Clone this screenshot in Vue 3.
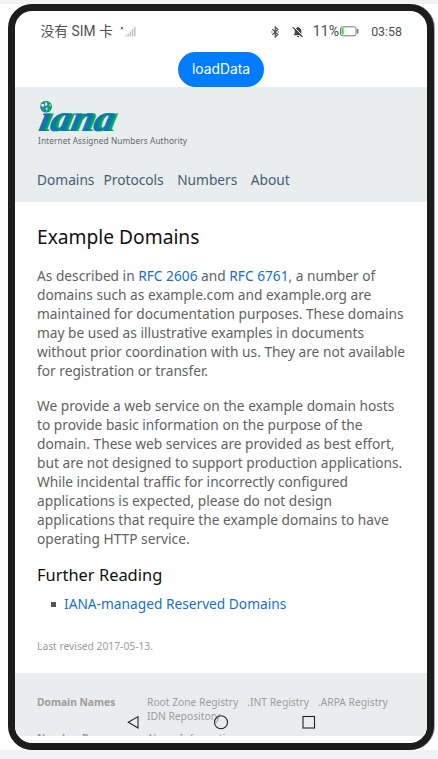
<script setup>
const nav = ['Domains', 'Protocols', 'Numbers', 'About']
</script>

<template>
  <div class="stage">
    <main class="phone">
      <header class="status">
        <span class="sim">没有 SIM 卡</span>
        <svg class="signal" width="17" height="12" viewBox="0 0 17 12">
          <path d="M.8 1l2.4 2.4M3.2 1L.8 3.4" stroke="#555" stroke-width="1" />
          <path d="M6 10.5V9M8.2 10.5v-3M10.4 10.5V5.5M12.6 10.5V3M14.8 10.5V1" stroke="#c2c2c2" stroke-width="1.5" />
        </svg>
        <span class="fill"></span>
        <svg class="bt" width="9" height="12" viewBox="0 0 9 12" fill="none" stroke="#4a4a4a" stroke-width="1.1">
          <path d="M1.3 3.2L6.9 8.5L4.2 11V1l2.7 2.5L1.3 8.8M.3 6h1.2M6.8 6H8" />
        </svg>
        <svg class="bell" width="12" height="12" viewBox="0 0 12 12">
          <path d="M1.5 9.2h9L9.3 7.5V5C9.3 3 8 2 6.8 1.7V.8H5.2v.9C4 2 2.7 3 2.7 5v2.5zM4.5 10h3L6 11.5z" fill="#444" />
          <path d="M1.5.5l10 10" stroke="#fff" stroke-width="1" />
          <path d="M.7 1.2l9.8 9.8" stroke="#444" stroke-width="1.1" />
        </svg>
        <span class="percent">11%</span>
        <svg class="battery" width="19" height="11" viewBox="0 0 19 11">
          <rect x=".5" y=".8" width="15.5" height="9" rx="2" fill="#fff" stroke="#777" />
          <rect x="1.3" y="2" width="2.5" height="6.5" rx=".7" fill="#4cdc57" />
          <path d="M17.7 3v4.5" stroke="#777" stroke-width="1.5" />
        </svg>
        <span class="clock">03:58</span>
      </header>
      <div class="action"><button>loadData</button></div>

      <section class="web">
        <div class="masthead">
          <svg class="logo" width="155" height="48" viewBox="0 0 155 48">
            <g class="mark" transform="translate(0 31.3) skewX(-12)">
              <text class="green" x="3.2" y="0" textLength="75" lengthAdjust="spacingAndGlyphs">ıana</text>
              <text class="blue" x="0" y="-.7" textLength="75" lengthAdjust="spacingAndGlyphs">ıana</text>
            </g>
            <circle cx="9" cy="6.8" r="5.8" fill="#168ac1" />
            <path d="M3.4 4.2C4.7 2 6.7 1 8.9 1L7.5 3.2 6 6.3zM10.2 1l3.6 2.2 1.2 4-2.2 4.3-3-1.5.3-3.5 2-1zM5.2 8l2.7 1 .3 3.4-3-1.4z" fill="#18a34c" />
            <path d="M3.7 4.5l3-.8.8 2.3-2 1zM8.9 1.4l1.7 2.9-1.7 2-1-2zM8.4 8.2l2-.8-.2 3.6zM12.2 4l1.5 1-.7 2z" fill="#e2f3ee" />
            <text class="tagline" x="1" y="44" textLength="149">Internet Assigned Numbers Authority</text>
          </svg>
          <nav>
            <a v-for="item in nav" :key="item">{{ item }}</a>
          </nav>
        </div>

        <article>
          <h1>Example Domains</h1>
          <p>
            As described in <a>RFC 2606</a> and <a>RFC 6761</a>, a number of<br />
            domains such as example.com and example.org are<br />
            maintained for documentation purposes. These domains<br />
            may be used as illustrative examples in documents<br />
            without prior coordination with us. They are not available<br />
            for registration or transfer.
          </p>
          <p>
            We provide a web service on the example domain hosts<br />
            to provide basic information on the purpose of the<br />
            domain. These web services are provided as best effort,<br />
            but are not designed to support production applications.<br />
            While incidental traffic for incorrectly configured<br />
            applications is expected, please do not design<br />
            applications that require the example domains to have<br />
            operating HTTP service.
          </p>
          <h2>Further Reading</h2>
          <div class="item"><i></i><a>IANA-managed Reserved Domains</a></div>
          <div class="revised">Last revised 2017-05-13.</div>
        </article>

        <footer>
          <div class="row">
            <b>Domain Names</b>
            <div class="links"><span>Root Zone Registry</span><span>.INT Registry</span><span>.ARPA Registry</span><span>IDN Repository</span></div>
          </div>
          <div class="row">
            <b>Number Resources</b>
            <div class="links"><span>Abuse Information</span></div>
          </div>
        </footer>
      </section>

      <svg class="keys" width="190" height="16" viewBox="0 0 190 16" fill="none" stroke="#222" stroke-width="1.1">
        <path d="M11 2.6v11.4L1.3 8.3z" />
        <circle cx="94" cy="8.2" r="6.5" />
        <rect x="176" y="2.5" width="11.5" height="11.5" />
      </svg>
    </main>
  </div>
</template>

<style>
body {
  margin: 0;
  background: #f1f2f4;
}
</style>

<style scoped>
.stage {
  box-sizing: border-box;
  width: 438px;
  height: 759px;
  padding: 4px 0 0 8px;
  overflow: hidden;
  background: linear-gradient(#f1f2f4 4px, #fff 4px, #fff 750px, #f1f2f4 750px);
  font-family: "Noto Sans", "Noto Sans CJK SC", sans-serif;
}
.phone {
  position: relative;
  box-sizing: border-box;
  width: 426px;
  height: 746px;
  border: 7px solid #1c1c1c;
  border-radius: 24px;
  background: #fff;
  overflow: hidden;
  box-shadow: 1px 0 0 #aaa;
}
.status {
  display: flex;
  align-items: center;
  height: 41px;
  padding: 0 25px 0 25.5px;
  color: #505050;
  font: 13.8px/41px Roboto, "Noto Sans CJK SC", sans-serif;
  white-space: nowrap;
}
.sim { width: 73px; }
.signal { margin: 1px 0 0 6px; }
.fill { flex: 1; }
.bt { margin-top: 1px; }
.bell { margin-left: 12px; margin-top: 1px; }
.percent { margin-left: 9px; font-size: 14.2px; }
.battery { margin: 0 0 0 1px; }
.clock { margin-left: 12px; font-size: 12.4px; }
.action {
  display: flex;
  justify-content: center;
  height: 35px;
}
button {
  width: 86px;
  height: 34.5px;
  padding: 0;
  border: 0;
  border-radius: 18px;
  background: #007dff;
  color: #fff;
  font: 400 13.8px/34px Inter, sans-serif;
}
.web {
  height: 649px;
  overflow: hidden;
}
.masthead {
  box-sizing: border-box;
  height: 115px;
  padding: 13px 22px 0;
  background: #e9edee;
}
.logo { display: block; }
.mark {
  font: italic bold 38px "Liberation Serif", serif;
}
.green { fill: #12a34b; }
.blue { fill: #0879b8; }
.tagline { font-size: 8.3px; fill: #666; }
nav {
  display: flex;
  margin-top: 21.5px;
  color: #3f6075;
  font-size: 13.73px;
  line-height: 19px;
}
nav a + a { margin-left: 13.5px; }
nav a:nth-child(2) { margin-left: 9px; }
article {
  box-sizing: border-box;
  height: 471px;
  padding: 21px 0 0 22px;
  color: #626262;
  font-size: 13.73px;
  line-height: 18.9px;
  white-space: nowrap;
}
h1, h2 { margin: 0; color: #111; font-weight: 400; }
h1 { font-size: 19.2px; line-height: 27px; }
h2 { margin-top: 14.5px; font-size: 16.45px; line-height: 23px; }
p { margin: 17px 0 0; }
.item {
  display: flex;
  align-items: center;
  margin-top: 9px;
}
article a { color: #176fce; }
.item i {
  width: 5px;
  height: 5px;
  margin: 0 8px 0 14px;
  background: #555;
}
.revised {
  margin-top: 22.5px;
  color: #9c9c9c;
  font-size: 10.27px;
}
footer {
  padding: 22px 22px 0;
  background: #e9edee;
  color: #9c9c9c;
  font-size: 10.27px;
  line-height: 14px;
}
.row { display: flex; height: 35.5px; }
.row b { width: 110px; flex: none; }
.links {
  display: flex;
  flex-wrap: wrap;
  align-content: flex-start;
  column-gap: 9px;
}
.keys {
  position: absolute;
  left: 112px;
  top: 703px;
}
</style>
